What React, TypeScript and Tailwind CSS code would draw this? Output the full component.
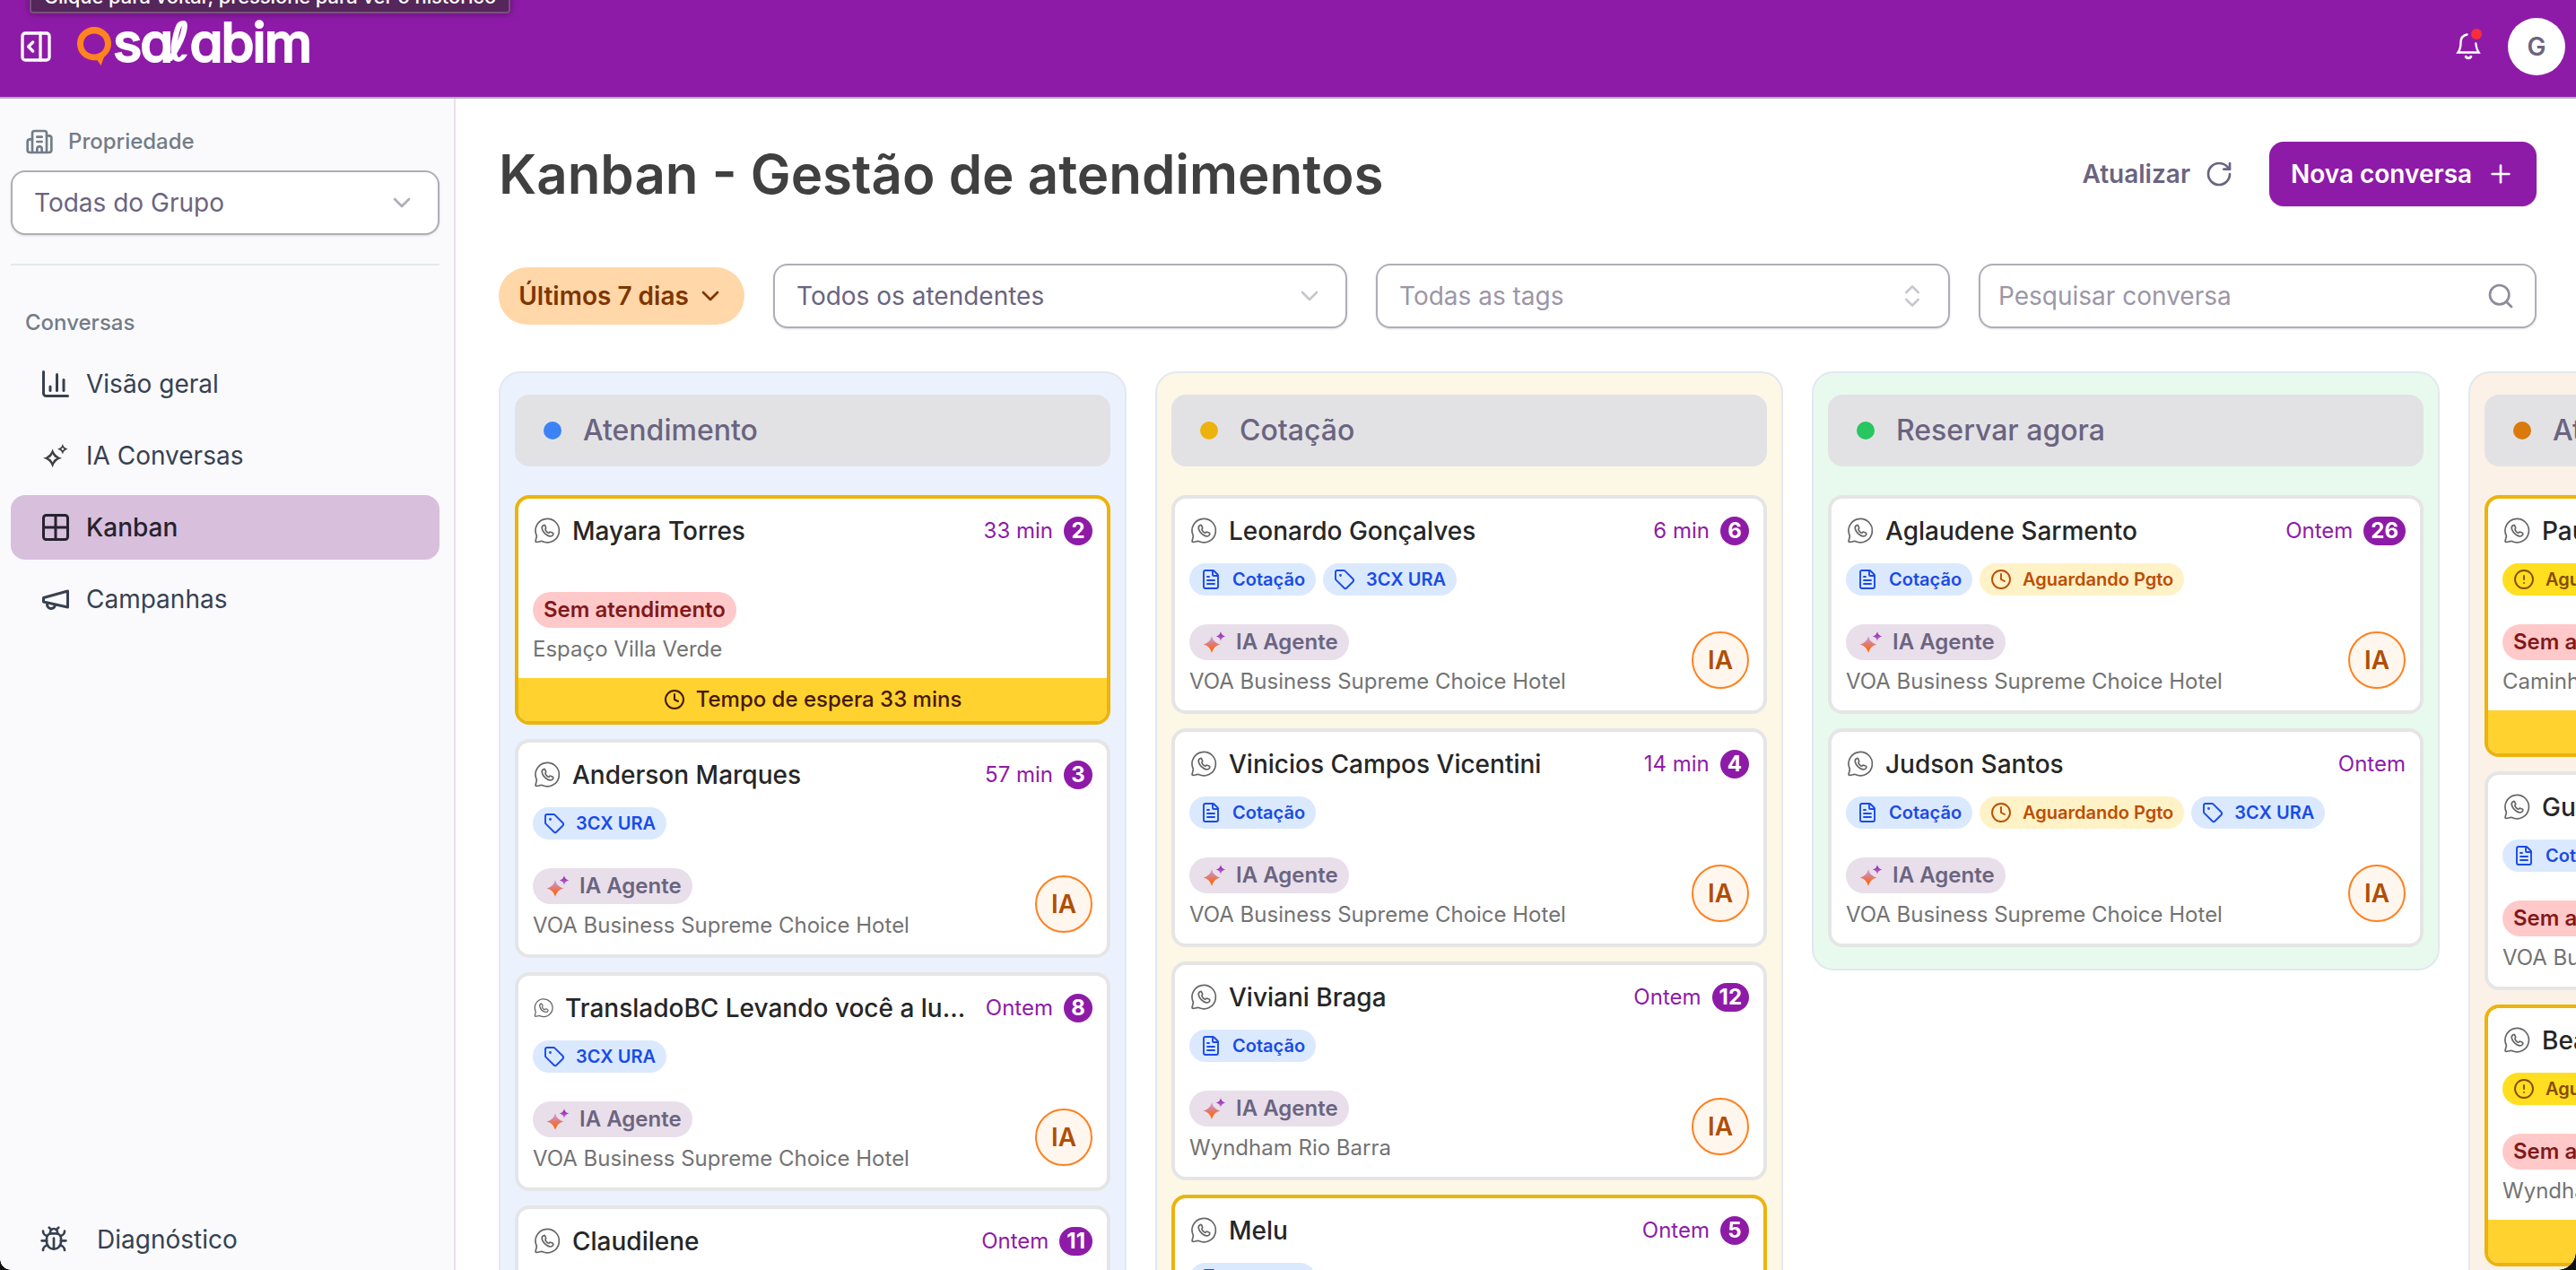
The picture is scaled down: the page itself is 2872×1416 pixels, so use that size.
import {
  Building2,
  ChartColumn,
  ChevronDown,
  ChevronsUpDown,
  CircleAlert,
  Clock,
  FileText,
  Grid2x2,
  Bug,
  PanelRightOpen,
  Plus,
  RotateCw,
  Search,
  Tag,
} from "lucide-react";

type TagKind = "cotacao" | "ura" | "pgto" | "aguardando";

type Conversation = {
  name: string;
  time: string;
  unread?: number;
  tags: TagKind[];
  agent: boolean;
  place: string;
  wait?: string;
};

const columns: { title: string; dot: string; bg: string; cards: Conversation[] }[] = [
  {
    title: "Atendimento",
    dot: "bg-[#3b82f6]",
    bg: "bg-[#ebf2fe]",
    cards: [
      { name: "Mayara Torres", time: "33 min", unread: 2, tags: [], agent: false, place: "Espaço Villa Verde", wait: "33 mins" },
      { name: "Anderson Marques", time: "57 min", unread: 3, tags: ["ura"], agent: true, place: "VOA Business Supreme Choice Hotel" },
      { name: "TransladoBC Levando você a lugares", time: "Ontem", unread: 8, tags: ["ura"], agent: true, place: "VOA Business Supreme Choice Hotel" },
      { name: "Claudilene", time: "Ontem", unread: 11, tags: ["cotacao"], agent: true, place: "VOA Business Supreme Choice Hotel" },
    ],
  },
  {
    title: "Cotação",
    dot: "bg-[#ecb30d]",
    bg: "bg-[#fdf7e6]",
    cards: [
      { name: "Leonardo Gonçalves", time: "6 min", unread: 6, tags: ["cotacao", "ura"], agent: true, place: "VOA Business Supreme Choice Hotel" },
      { name: "Vinicios Campos Vicentini", time: "14 min", unread: 4, tags: ["cotacao"], agent: true, place: "VOA Business Supreme Choice Hotel" },
      { name: "Viviani Braga", time: "Ontem", unread: 12, tags: ["cotacao"], agent: true, place: "Wyndham Rio Barra" },
      { name: "Melu", time: "Ontem", unread: 5, tags: ["cotacao"], agent: false, place: "Wyndham Rio Barra", wait: "1 dia" },
    ],
  },
  {
    title: "Reservar agora",
    dot: "bg-[#27c65f]",
    bg: "bg-[#e8faee]",
    cards: [
      { name: "Aglaudene Sarmento", time: "Ontem", unread: 26, tags: ["cotacao", "pgto"], agent: true, place: "VOA Business Supreme Choice Hotel" },
      { name: "Judson Santos", time: "Ontem", tags: ["cotacao", "pgto", "ura"], agent: true, place: "VOA Business Supreme Choice Hotel" },
    ],
  },
  {
    title: "Atendimento humano",
    dot: "bg-[#d97a0b]",
    bg: "bg-[#fcf1e6]",
    cards: [
      { name: "Paulo", time: "Ontem", tags: ["aguardando"], agent: false, place: "Caminho do Mar", wait: "1 dia" },
      { name: "Gustavo", time: "Ontem", tags: ["cotacao"], agent: false, place: "VOA Business Supreme Choice Hotel" },
      { name: "Beatriz", time: "Ontem", tags: ["aguardando"], agent: false, place: "Wyndham Rio Barra", wait: "1 dia" },
    ],
  },
];

const tagStyles = {
  cotacao: { label: "Cotação", icon: FileText, className: "bg-[#dbe9fe] text-[#1a4be8]" },
  ura: { label: "3CX URA", icon: Tag, className: "bg-[#dbe9fe] text-[#1a4be8]" },
  pgto: { label: "Aguardando Pgto", icon: Clock, className: "bg-[#fef2c6] text-[#bc4d05]" },
  aguardando: { label: "Aguardando", icon: CircleAlert, className: "bg-[#ffdf20] text-[#894b00]" },
};

const BIG_STAR = "M13 9.200Q14.900 16.600 22.300 18.500Q14.900 20.400 13 27.800Q11.100 20.400 3.700 18.500Q11.100 16.600 13 9.200Z";
const SMALL_STAR = "M23 4.300Q23.900 8.600 28.200 9.500Q23.900 10.400 23 14.700Q22.100 10.400 17.800 9.500Q22.100 8.600 23 4.300Z";

function SparkleOutline() {
  return (
    <svg viewBox="0 0 32 32" className="size-9 shrink-0" fill="#404040" fillRule="evenodd">
      <path d={`${BIG_STAR}M13 14.300Q12 17.500 8.800 18.500Q12 19.500 13 22.700Q14 19.500 17.200 18.500Q14 17.500 13 14.300Z`} />
      <path d={`${SMALL_STAR}M23 8.100L21.600 9.500L23 10.900L24.400 9.500Z`} />
    </svg>
  );
}

function SparkleGradient() {
  return (
    <svg viewBox="0 0 32 32" className="size-8 shrink-0">
      <defs>
        <linearGradient id="big" x1="0" y1="0" x2="0" y2="1">
          <stop offset="0" stopColor="#c9a0e8" />
          <stop offset="0.5" stopColor="#e07a70" />
          <stop offset="0.75" stopColor="#ff6a13" />
        </linearGradient>
        <linearGradient id="small" x1="0" y1="0" x2="0" y2="1">
          <stop offset="0" stopColor="#8e1ba8" />
          <stop offset="1" stopColor="#c070d8" />
        </linearGradient>
      </defs>
      <path d={BIG_STAR} fill="url(#big)" />
      <path d={SMALL_STAR} fill="url(#small)" />
    </svg>
  );
}

function MegaphoneIcon() {
  return (
    <svg viewBox="0 0 24 24" className="size-9 shrink-0" fill="none" stroke="currentColor" strokeWidth="2" strokeLinecap="round" strokeLinejoin="round">
      <path d="m3 11 18-5v12L3 14v-3z" />
      <path d="M11.6 16.8a3 3 0 1 1-5.8-1.6" />
    </svg>
  );
}

function BellIcon() {
  return (
    <svg viewBox="0 0 32 36" className="h-9 w-8" fill="none" stroke="#fff" strokeWidth="2.400" strokeLinecap="round">
      <path d="M14.500 6.500C9.500 7.500 7.500 11 7.500 15.500c0 5-.8 8-3 11h23c-1.800-2.600-2.800-5-3.200-10" />
      <path d="M13.200 31.200c1.200 2.200 4.400 2.200 5.600 0" strokeWidth="3" />
      <circle cx="25" cy="6" r="6" fill="#fa2d3c" stroke="none" />
    </svg>
  );
}

function WhatsappIcon({ small }: { small: boolean }) {
  return (
    <svg
      viewBox="0 0 32 32"
      className={small ? "w-6 shrink-0" : "w-8 shrink-0"}
      fill="none"
      stroke="#666"
      strokeWidth="1.7"
      strokeLinejoin="round"
    >
      <path d="M10.500 27.500A13.200 13.200 0 1 0 4.300 21.300c.4 1.800-1.700 4.800-1.100 6.800 1.800.9 4.300-.9 7.300-.6Z" />
      <path d="M12.400 9.500c-1.700.6-2.500 2.300-2 4.200 1 3.700 4.600 7.500 8.600 8.200 2 .3 3.600-.8 3.800-2.500.1-.8-.2-1.200-.8-1.400l-2.200-.8c-.6-.2-1 0-1.400.5-.4.6-.9.6-1.500.2-1.200-.7-2.200-1.800-2.800-3-.3-.6-.2-1 .3-1.400.4-.4.5-.8.2-1.400l-.9-2c-.3-.6-.7-.8-1.300-.6Z" />
    </svg>
  );
}

function Logo() {
  return (
    <div className="flex items-start">
      <svg viewBox="0 0 38 44" className="mt-[9px] h-11 w-[38px]">
        <path
          fill="#ff831f"
          fillRule="evenodd"
          d="M19 0C29.500 0 38 8.200 38 18.500c0 6.200-3.200 11.800-8 15.200L26.500 43 22.500 37.200C11 38.500 0 31 0 18.500 0 8.200 8.500 0 19 0Zm0 7.500C12 7.500 7 12.500 7 19S12 30.500 19 30.500 31 25.500 31 19 26 7.500 19 7.500Z"
        />
      </svg>
      <span className="-mt-[3px] ml-0.5 flex text-[60px] leading-[58px] font-medium tracking-[-2px] text-white [-webkit-text-stroke:2px_white] [font-feature-settings:'cv11']">
        sa
        <span className="w-[20px] -translate-x-1 font-['DejaVu_Sans'] text-[58px] tracking-normal">ℓ</span>
        abim
      </span>
    </div>
  );
}

function Header() {
  return (
    <header className="relative flex h-[110px] shrink-0 items-start justify-between border-b-2 border-[#b3aeba] bg-[#8e1ba8]">
      <div className="absolute -top-6 left-[33px] flex h-[39px] w-[536px] items-end justify-center rounded-b border-2 border-[#79507d] bg-[#542659] pb-[3px] text-[22px] leading-[28px] font-medium tracking-[-0.1px] whitespace-nowrap text-white shadow-[0_0_8px_rgba(0,0,0,0.4)]">
        Clique para voltar, pressione para ver o histórico
      </div>
      <div className="flex items-start pt-[21px] pl-5">
        <PanelRightOpen className="mt-[11px] size-10 text-white" />
        <div className="ml-[26px]">
          <Logo />
        </div>
      </div>
      <div className="flex items-start pt-5 pr-3">
        <div className="mt-3 mr-[28px]">
          <BellIcon />
        </div>
        <span className="flex size-16 items-center justify-center rounded-full bg-white text-[28px] font-semibold text-[#6b6480]">G</span>
      </div>
    </header>
  );
}

function Sidebar() {
  const item = "flex h-[72px] items-center gap-4 rounded-2xl pl-8 text-[28px]";

  return (
    <aside className="flex w-[508px] shrink-0 flex-col border-r-2 border-[#e8dfea] bg-[#fafafc] px-3 text-[#374151]">
      <div className="mt-8 flex h-8 items-center gap-4 pl-4 text-2xl font-medium text-[#737c88]">
        <Building2 className="size-8" />
        Propriedade
      </div>
      <div className="mt-4 flex h-[72px] w-[478px] items-center justify-between rounded-2xl border-2 border-[#b0adb8] bg-white pr-6 pl-6 text-[28px] text-[#6b6480] shadow-sm">
        Todas do Grupo
        <ChevronDown className="size-8 text-[#b0adb8]" />
      </div>
      <div className="mt-8 h-0.5 w-[478px] bg-[#e2e8f0]" />
      <p className="mt-12 h-8 pl-4 text-2xl font-medium text-[#737c88]">Conversas</p>
      <nav className="mt-4 flex w-[478px] flex-col gap-2">
        <div className={item}>
          <ChartColumn className="size-9" />
          Visão geral
        </div>
        <div className={item}>
          <SparkleOutline />
          IA Conversas
        </div>
        <div className={`${item} bg-[#d8bfdc] font-medium text-[#262230]`}>
          <Grid2x2 className="size-9" />
          Kanban
        </div>
        <div className={item}>
          <MegaphoneIcon />
          Campanhas
        </div>
      </nav>
      <div className="mt-auto flex h-[68px] items-center gap-8 pl-8 text-[28px]">
        <Bug className="size-8" />
        Diagnóstico
      </div>
    </aside>
  );
}

function Card({ card }: { card: Conversation }) {
  return (
    <article
      className={`overflow-hidden rounded-2xl border-4 bg-white ${card.wait ? "border-[#ecb30d]" : "border-[#e5e5e5]"}`}
    >
      <div className="px-4 pt-5 pb-4">
        <div className="flex h-8 items-center justify-between gap-4">
          <div className="flex min-w-0 items-center gap-3">
            <WhatsappIcon small={card.name.length > 30} />
            <h3 className="truncate text-[28px] leading-10 font-medium text-[#262626]">{card.name}</h3>
          </div>
          <div className="flex shrink-0 items-center gap-3 text-2xl text-[#8e1ba8]">
            {card.time}
            {card.unread && (
              <span className="flex h-8 min-w-8 items-center justify-center rounded-full bg-[#8e1ba8] px-2 font-bold text-white">
                {card.unread}
              </span>
            )}
          </div>
        </div>

        <div className="mt-5 flex gap-2">
          {card.tags.map((kind) => {
            const { label, icon: Icon, className } = tagStyles[kind];

            return (
              <span key={kind} className={`flex h-9 items-center gap-3 rounded-full px-3 text-xl font-semibold whitespace-nowrap ${className}`}>
                <Icon className="size-6" strokeWidth={1.9} />
                {label}
              </span>
            );
          })}
        </div>

        <div className="mt-8 flex items-center justify-between">
          <div>
            {card.agent ? (
              <span className="flex h-10 w-fit items-center gap-2 rounded-full bg-[#e8dfea] px-3 text-2xl font-semibold text-[#6b6480]">
                <SparkleGradient />
                IA Agente
              </span>
            ) : (
              <span className="flex h-10 w-fit items-center rounded-full bg-[#ffc9c9] px-3 text-2xl font-semibold text-[#82181a]">
                Sem atendimento
              </span>
            )}
            <p className="mt-2 text-2xl leading-8 text-[#737373]">{card.place}</p>
          </div>
          {card.agent && (
            <span className="flex size-16 items-center justify-center rounded-full border-2 border-[#ff8020] bg-[#fff6ed] text-[28px] font-semibold text-[#b04e06]">
              IA
            </span>
          )}
        </div>
      </div>

      {card.wait && (
        <div className="flex h-12 items-center justify-center gap-3 bg-[#ffd230] text-2xl font-medium text-[#461901]">
          <Clock className="size-6" />
          Tempo de espera {card.wait}
        </div>
      )}
    </article>
  );
}

function Filters() {
  const field = "flex h-[72px] items-center justify-between rounded-2xl border-2 border-[#b0adb8] bg-white text-[28px] shadow-sm";

  return (
    <div className="mt-16 flex w-[2272px] items-center gap-8">
      <button className="flex h-16 w-[274px] items-center justify-center gap-2 rounded-full bg-[#ffd7a8] text-[28px] font-semibold text-[#7e3500]">
        Últimos 7 dias
        <ChevronDown className="size-8" />
      </button>
      <div className={`${field} w-[640px] pr-6 pl-6 text-[#6b6480]`}>
        Todos os atendentes
        <ChevronDown className="size-8 text-[#c8c6ce]" />
      </div>
      <div className={`${field} w-[640px] pr-6 pl-6 text-[#9c96a8]`}>
        Todas as tags
        <ChevronsUpDown className="size-8 text-[#c8c6ce]" />
      </div>
      <div className={`${field} flex-1 pr-[22px] pl-5 text-[#9c96a8]`}>
        Pesquisar conversa
        <Search className="size-8 text-[#8f8a9c]" />
      </div>
    </div>
  );
}

export default function App() {
  return (
    <div className="relative flex h-[1416px] w-[2872px] flex-col overflow-hidden bg-white font-[Inter,sans-serif]">
      <Header />
      <div className="flex min-h-0 flex-1">
        <Sidebar />
        <main className="min-w-0 flex-1 overflow-hidden pt-12 pl-12">
          <div className="flex h-[72px] w-[2272px] items-center justify-between">
            <h1 className="text-[60px] leading-[72px] font-semibold text-[#404040]">Kanban - Gestão de atendimentos</h1>
            <div className="flex items-center gap-10 text-[28px] font-semibold">
              <span className="flex items-center gap-4 text-[#6b6480]">
                Atualizar
                <RotateCw className="size-8" />
              </span>
              <button className="flex h-[72px] w-[298px] items-center justify-center gap-4 rounded-2xl bg-[#8e1ba8] text-white shadow-sm">
                Nova conversa
                <Plus className="size-8" />
              </button>
            </div>
          </div>

          <Filters />

          <div className="mt-12 flex items-start gap-8">
            {columns.map((column) => (
              <section
                key={column.title}
                className={`w-[700px] shrink-0 rounded-3xl border-2 border-[#e2e8f0] px-4 py-6 ${column.bg}`}
              >
                <div className="flex h-20 items-center gap-6 rounded-2xl bg-[#e2e2e5] pl-8 text-[32px] font-medium text-[#6b6480]">
                  <span className={`size-5 rounded-full ${column.dot}`} />
                  {column.title}
                </div>
                <div className="mt-8 flex flex-col gap-4">
                  {column.cards.map((card) => (
                    <Card key={card.name} card={card} />
                  ))}
                </div>
              </section>
            ))}
          </div>
        </main>
      </div>
      {/* rounded window corners */}
      <div className="absolute bottom-0 left-0 size-3 bg-[radial-gradient(circle_at_100%_0,transparent_11.5px,#111_12px)]" />
      <div className="absolute right-0 bottom-0 size-5 bg-[radial-gradient(circle_at_0_0,transparent_19.5px,#111_20px)]" />
    </div>
  );
}
